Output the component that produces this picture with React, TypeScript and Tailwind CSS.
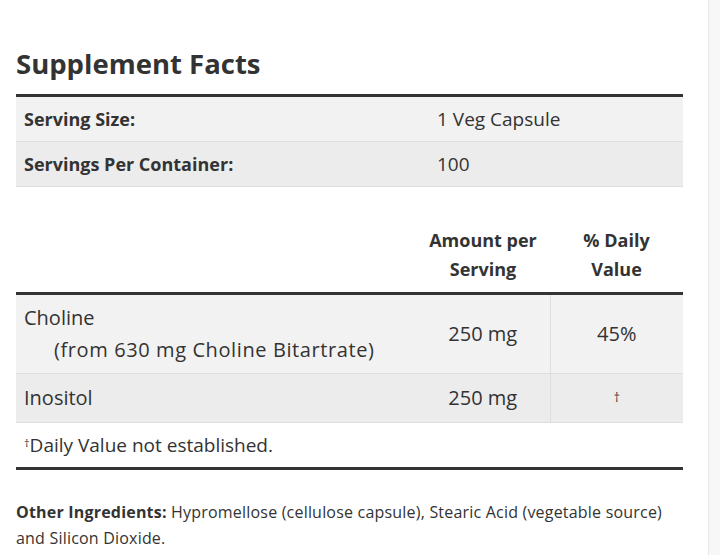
import React from "react";

const font = { fontFamily: "'Open Sans', 'Noto Sans', sans-serif" };

export default function App() {
  return (
    <div className="flex w-[720px] h-[555px] overflow-hidden bg-white text-[#333]" style={font}>
      <div className="w-[708px] pl-4 pr-[25px]">
        <h2 className="mt-[45px] text-[27.5px] font-bold leading-[38px] text-[#333]">Supplement Facts</h2>
        <table className="mt-[11px] w-[667px] border-collapse border-t-[3px] border-[#333] text-[18px] leading-[28px]">
          <tbody>
            <tr className="bg-[#f2f2f2] border-b border-[#dedede]">
              <td className="w-[413px] px-2 py-2 font-bold">Serving Size:</td>
              <td className="px-2 py-2 text-[19px]">1 Veg Capsule</td>
            </tr>
            <tr className="bg-[#ececec] border-b border-[#dedede]">
              <td className="px-2 py-2 font-bold">Servings Per Container:</td>
              <td className="px-2 py-2 text-[19px]">100</td>
            </tr>
          </tbody>
        </table>

        <table className="mt-[31px] w-[667px] border-collapse text-[18px] leading-[29px]">
          <thead>
            <tr className="border-b-[3px] border-[#333]">
              <th className="w-[400px] px-2 py-2"></th>
              <th className="w-[134px] px-2 py-2 text-center font-bold">Amount per<br />Serving</th>
              <th className="px-2 py-2 text-center font-bold">% Daily<br />Value</th>
            </tr>
          </thead>
          <tbody className="text-[20px] leading-[32px]">
            <tr className="bg-[#f2f2f2] border-b border-[#dedede]">
              <td className="px-2 py-[7px] align-middle">
                Choline
                <br />
                <span className="pl-[30px] tracking-[0.6px]">(from 630 mg Choline Bitartrate)</span>
              </td>
              <td className="px-2 py-[7px] text-center align-middle">250 mg</td>
              <td className="px-2 py-[7px] text-center align-middle border-l border-[#dedede]">45%</td>
            </tr>
            <tr className="bg-[#ececec] border-b border-[#dedede]">
              <td className="px-2 py-2">Inositol</td>
              <td className="px-2 py-2 text-center">250 mg</td>
              <td className="px-2 py-2 text-center border-l border-[#dedede] text-[12px] text-[#333] align-middle">†</td>
            </tr>
            <tr className="border-b-[3px] border-[#333]">
              <td colSpan={3} className="px-2 py-2 text-[19px] leading-[28px]">
                <sup className="text-[11px]">†</sup>Daily Value not established.
              </td>
            </tr>
          </tbody>
        </table>

        <p className="mt-[29px] text-[16px] leading-[26px] tracking-[0.2px] text-[#333]">
          <span className="font-bold">Other Ingredients:</span> Hypromellose (cellulose capsule), Stearic Acid (vegetable source)
          <br />
          and Silicon Dioxide.
        </p>
      </div>
      <div className="w-[12px] h-full bg-[#f7f7f7] border-l border-[#e6e6e6]"></div>
    </div>
  );
}
